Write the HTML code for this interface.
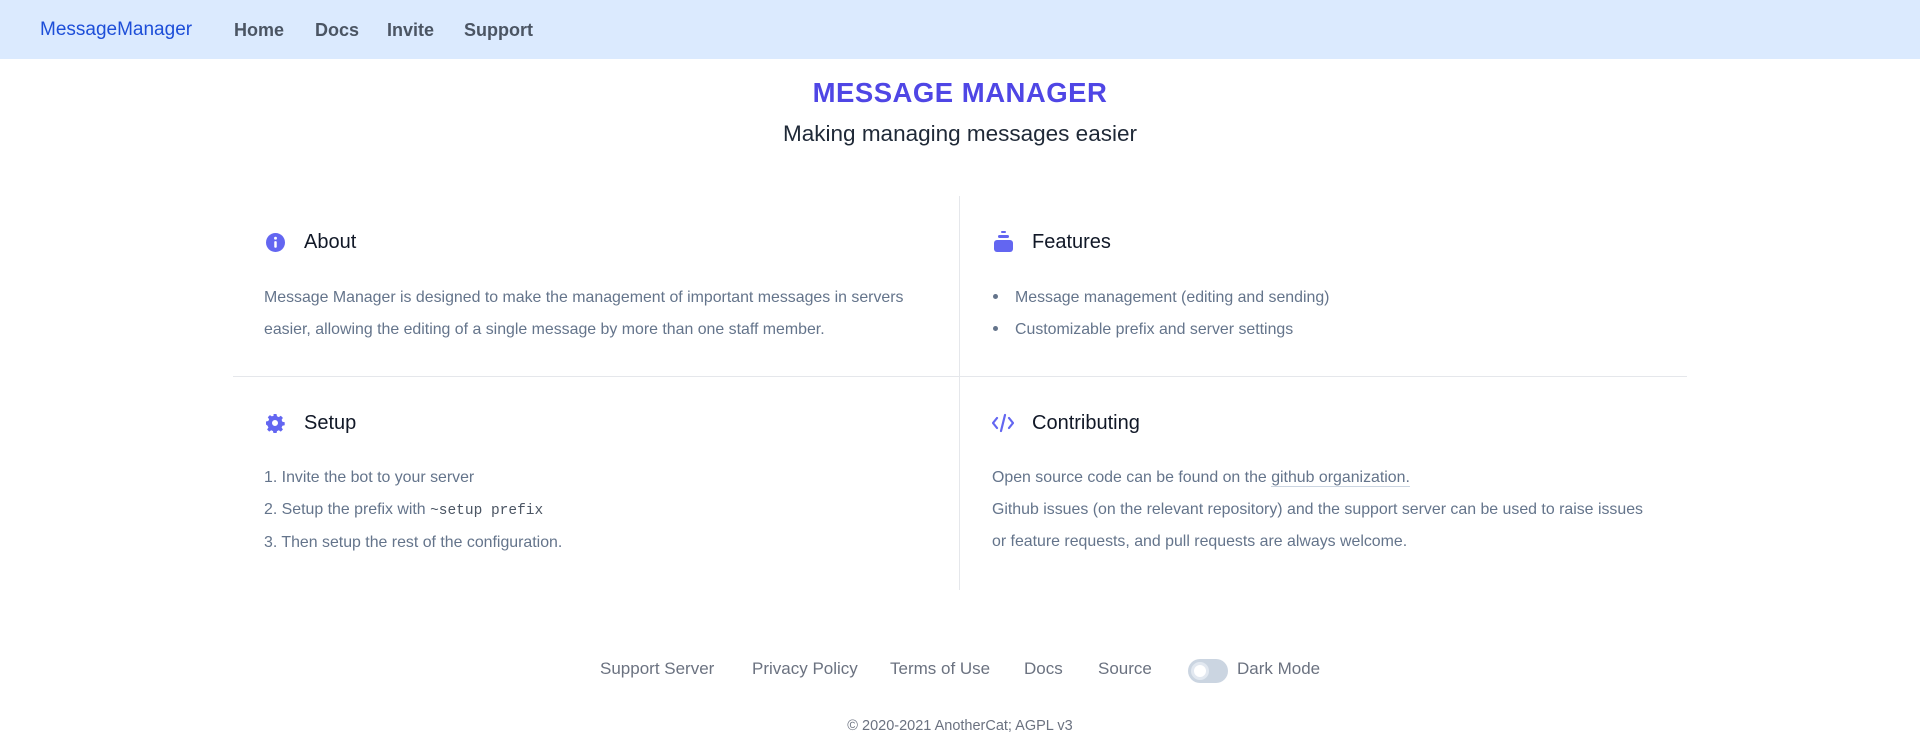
<!DOCTYPE html>
<html><head><meta charset="utf-8"><style>
*{margin:0;padding:0;box-sizing:border-box}
body{width:1920px;height:756px;background:#fff;font-family:"Liberation Sans",sans-serif;position:relative;overflow:hidden}
.a{position:absolute;white-space:nowrap}
nav{position:absolute;left:0;top:0;width:1920px;height:59px;background:#dbeafe}
.brand{left:40px;top:19px;font-size:19px;color:#1d4ed8}
.nl{top:20px;font-size:18px;color:#4b5563;font-weight:bold}
.title{left:0;width:1920px;text-align:center;top:77px;font-size:27.5px;font-weight:bold;color:#4f46e5;letter-spacing:0.5px}
.sub{left:0;width:1920px;text-align:center;top:121px;font-size:22.5px;color:#1f2937}
.h{font-size:20px;color:#111827}
.t{font-size:15.9px;color:#64748b}
.f{font-size:17px;color:#6b7280;top:659px}
</style></head><body>
<nav></nav>
<div class="a brand">MessageManager</div>
<div class="a nl" style="left:234px">Home</div>
<div class="a nl" style="left:315px">Docs</div>
<div class="a nl" style="left:387px">Invite</div>
<div class="a nl" style="left:464px">Support</div>
<div class="a title">MESSAGE MANAGER</div>
<div class="a sub">Making managing messages easier</div>

<div class="a" style="left:959px;top:196px;width:1px;height:394px;background:#e5e7eb"></div>
<div class="a" style="left:233px;top:376px;width:1454px;height:1px;background:#e5e7eb"></div>

<svg class="a" style="left:266px;top:233px" width="19" height="19" viewBox="0 0 20 20"><circle cx="10" cy="10" r="10" fill="#6366f1"/><circle cx="10" cy="5.5" r="1.5" fill="#fff"/><rect x="8.7" y="8.5" width="2.6" height="7" rx="1" fill="#fff"/></svg>
<div class="a h" style="left:304px;top:231px">About</div>
<div class="a t" style="left:264px;top:282px;line-height:32px">Message Manager is designed to make the management of important messages in servers<br>easier, allowing the editing of a single message by more than one staff member.</div>

<svg class="a" style="left:993px;top:231px" width="21" height="22" viewBox="0 0 21 22"><rect x="8" y="0" width="5" height="2" rx="1" fill="#6366f1"/><rect x="5" y="4" width="11" height="3" rx="1.5" fill="#6366f1"/><rect x="1" y="9" width="19" height="12" rx="3" fill="#6366f1"/></svg>
<div class="a h" style="left:1032px;top:231px">Features</div>
<div class="a" style="left:993px;top:294px;width:5px;height:5px;border-radius:50%;background:#64748b"></div>
<div class="a" style="left:993px;top:326px;width:5px;height:5px;border-radius:50%;background:#64748b"></div>
<div class="a t" style="left:1015px;top:282px;line-height:32px">Message management (editing and sending)<br>Customizable prefix and server settings</div>

<svg class="a" style="left:265px;top:413px" width="20" height="20" viewBox="0 0 20 20"><path fill="#6366f1" fill-rule="evenodd" d="M11.5 1l.5 2.3 1.8.8 2-1.3 2.1 2.1-1.3 2 .8 1.8 2.3.5v3l-2.3.5-.8 1.8 1.3 2-2.1 2.1-2-1.3-1.8.8-.5 2.3h-3l-.5-2.3-1.8-.8-2 1.3-2.1-2.1 1.3-2-.8-1.8L1 11.5v-3l2.3-.5.8-1.8-1.3-2 2.1-2.1 2 1.3 1.8-.8L8.5 1zM10 7a3 3 0 100 6 3 3 0 000-6z"/></svg>
<div class="a h" style="left:304px;top:412px">Setup</div>
<div class="a t" style="left:264px;top:462px;line-height:32px">1. Invite the bot to your server<br>2. Setup the prefix with <span style="font-family:'Liberation Mono',monospace;font-size:14.5px;color:#4b5563">~setup prefix</span><br>3. Then setup the rest of the configuration.</div>

<svg class="a" style="left:992px;top:413px" width="22" height="20" viewBox="0 0 22 20"><path d="M5 5l-4 5 4 5M17 5l4 5-4 5M13 2l-4 16" stroke="#6366f1" stroke-width="2.2" fill="none" stroke-linecap="round" stroke-linejoin="round"/></svg>
<div class="a h" style="left:1032px;top:412px">Contributing</div>
<div class="a t" style="left:992px;top:462px;line-height:32px">Open source code can be found on the <span style="border-bottom:1px solid #cbd5e1">github organization.</span><br>Github issues (on the relevant repository) and the support server can be used to raise issues<br>or feature requests, and pull requests are always welcome.</div>

<div class="a f" style="left:600px">Support Server</div>
<div class="a f" style="left:752px">Privacy Policy</div>
<div class="a f" style="left:890px">Terms of Use</div>
<div class="a f" style="left:1024px">Docs</div>
<div class="a f" style="left:1098px">Source</div>
<div class="a" style="left:1188px;top:659px;width:40px;height:24px;border-radius:12px;background:#cbd5e1"></div>
<div class="a" style="left:1191px;top:662px;width:18px;height:18px;border-radius:50%;background:#fff;border:3px solid #e2e8f0"></div>
<div class="a f" style="left:1237px">Dark Mode</div>
<div class="a" style="left:0;width:1920px;text-align:center;top:718px;font-size:14.5px;color:#6b7280">© 2020-2021 AnotherCat; AGPL v3</div>
</body></html>
